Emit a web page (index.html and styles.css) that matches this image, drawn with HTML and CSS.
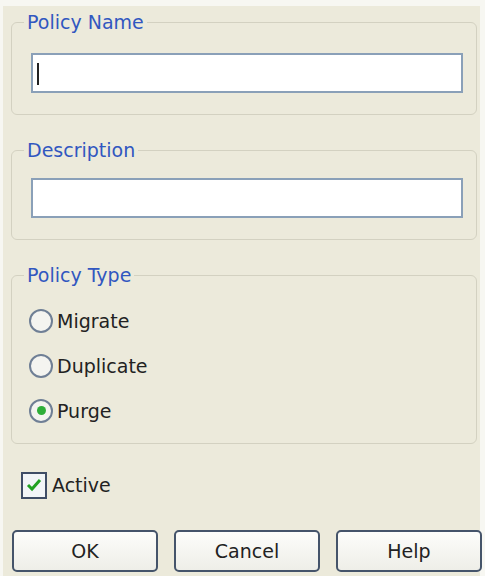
FILE: index.html
```html
<!DOCTYPE html>
<html lang="en">
<head>
    <meta charset="UTF-8">
    <title>Policy</title>
    <link rel="stylesheet" href="styles.css">
</head>
<body>
<div class="dialog">
    <fieldset class="group">
        <legend>Policy Name</legend>
        <div class="field"><span class="caret"></span></div>
    </fieldset>
    <fieldset class="group desc">
        <legend>Description</legend>
        <div class="field"></div>
    </fieldset>
    <fieldset class="group types">
        <legend>Policy Type</legend>
        <div class="option"><span class="radio"></span>Migrate</div>
        <div class="option"><span class="radio"></span>Duplicate</div>
        <div class="option"><span class="radio checked"></span>Purge</div>
    </fieldset>
    <div class="active">
        <span class="check">
            <svg width="18" height="16" viewBox="0 0 18 16"><path d="M3 8 L7 12 L15 3" fill="none" stroke="#21a121" stroke-width="3"/></svg>
        </span>
        Active
    </div>
    <div class="buttons">
        <div class="btn">OK</div>
        <div class="btn">Cancel</div>
        <div class="btn">Help</div>
    </div>
</div>
</body>
</html>
```

FILE: styles.css
```css
body {
    margin: 0;
    background: #f7f7f2;
    font-family: 'DejaVu Sans', sans-serif;
    font-size: 19px;
    color: #222;
}
.dialog {
    margin: 6px 5px 0 3px;
    height: 570px;
    padding: 5px 3px 0 8px;
    background: #eceadb;
    box-sizing: border-box;
}
.group {
    margin: 0 0 24px 0;
    padding: 20px 13px 21px 19px;
    border: 1px solid #d3d1c1;
    border-radius: 6px;
}
.group legend {
    color: #3157c0;
    line-height: 22px;
    padding: 0 3px;
    margin-left: -7px;
}
.desc {
    padding-top: 17px;
}
.field {
    height: 40px;
    background: #fff;
    border: 2px solid #8aa0b8;
    box-sizing: border-box;
    padding: 8px 4px;
}
.caret {
    display: block;
    width: 2px;
    height: 22px;
    background: #222;
}
.types {
    padding: 12px 13px 10px 19px;
    margin-bottom: 27px;
}
.option {
    display: flex;
    align-items: center;
    height: 45px;
    margin-left: -2px;
}
.radio {
    width: 20px;
    height: 20px;
    border: 2px solid #6f7f95;
    border-radius: 50%;
    background: #f4f4f0;
    margin-right: 4px;
    display: flex;
    align-items: center;
    justify-content: center;
}
.radio.checked::after {
    content: "";
    width: 9px;
    height: 9px;
    border-radius: 50%;
    background: #2fae3a;
}
.active {
    display: flex;
    align-items: center;
    gap: 5px;
    margin-left: 10px;
    height: 28px;
}
.check {
    width: 22px;
    height: 23px;
    border: 2px solid #3f4d66;
    background: #f2f5f7;
    display: flex;
    align-items: center;
    justify-content: center;
}
.buttons {
    display: flex;
    gap: 16px;
    margin: 31px 0 0 1px;
}
.btn {
    flex-shrink: 0;
    width: 142px;
    height: 38px;
    border: 2px solid #45546a;
    border-radius: 5px;
    background: linear-gradient(#fdfdfb, #eeeee8);
    display: flex;
    align-items: center;
    justify-content: center;
}
```
